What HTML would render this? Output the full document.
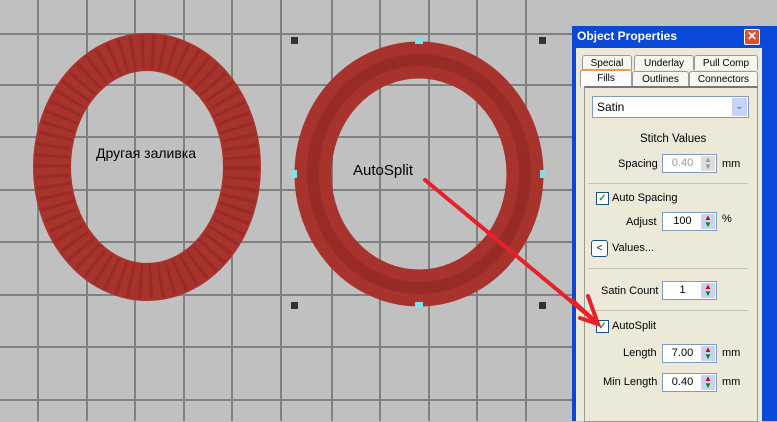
<!DOCTYPE html>
<html><head><style>
body{margin:0;width:777px;height:421px;overflow:hidden;background:#c0c0c0;font-family:"Liberation Sans",sans-serif;position:relative}
.p{position:absolute;left:572px;top:26px;width:205px;height:395px;background:#0a48d8;}
.t{position:absolute;left:5px;top:3px;color:#fff;font-weight:bold;font-size:12px}
.x{position:absolute;left:172px;top:3px;width:14px;height:14px;background:#e05030;border:1px solid #fff;border-radius:2px;color:#fff;font-size:12px;line-height:13px;text-align:center;font-weight:bold}
.in{position:absolute;left:4px;top:22px;width:186px;height:373px;background:#ece9d8}
.tab{position:absolute;height:14px;border:1px solid #9a9a9a;border-bottom:none;background:#f7f7f2;font-size:10px;text-align:center;line-height:15px;border-radius:3px 3px 0 0}
.l{position:absolute;font-size:11px;color:#000}
.box{position:absolute;height:17px;background:#fff;border:1px solid #7f9db9;font-size:11px;line-height:17px;text-align:center;padding-right:14px;box-sizing:content-box}
.sp{position:absolute;width:14px;height:15px;background:#c6d3f7;top:1px;right:1px;font-size:8px;line-height:7px;text-align:center}
.hr{position:absolute;left:12px;width:160px;height:1px;background:#c5c2b2}
.cb{position:absolute;width:11px;height:11px;border:1px solid #1c5180;background:#fff;color:#21a121;font-size:10px;line-height:11px;text-align:center;font-weight:bold}
</style></head><body>
<svg width="777" height="421" style="position:absolute;left:0;top:0">
<g stroke="#808080" stroke-width="2">
<line x1="38" y1="0" x2="38" y2="421"/><line x1="87" y1="0" x2="87" y2="421"/><line x1="135" y1="0" x2="135" y2="421"/><line x1="184" y1="0" x2="184" y2="421"/><line x1="232" y1="0" x2="232" y2="421"/><line x1="281" y1="0" x2="281" y2="421"/><line x1="332" y1="0" x2="332" y2="421"/><line x1="380" y1="0" x2="380" y2="421"/><line x1="429" y1="0" x2="429" y2="421"/><line x1="477" y1="0" x2="477" y2="421"/><line x1="526" y1="0" x2="526" y2="421"/>
<line x1="0" y1="34" x2="777" y2="34"/><line x1="0" y1="85" x2="777" y2="85"/><line x1="0" y1="137" x2="777" y2="137"/><line x1="0" y1="190" x2="777" y2="190"/><line x1="0" y1="242" x2="777" y2="242"/><line x1="0" y1="295" x2="777" y2="295"/><line x1="0" y1="347" x2="777" y2="347"/><line x1="0" y1="400" x2="777" y2="400"/>
</g>
<ellipse cx="147" cy="167" rx="95" ry="115" fill="none" stroke="#a8322c" stroke-width="38"/>
<ellipse cx="147" cy="167" rx="95" ry="115" fill="none" stroke="#7e1f1a" stroke-width="34" stroke-dasharray="3 7" opacity=".35"/>
<ellipse cx="419" cy="174" rx="106" ry="114" fill="none" stroke="#a8322c" stroke-width="37"/>
<ellipse cx="419" cy="174" rx="106" ry="114" fill="none" stroke="#8a241f" stroke-width="12" opacity=".5"/>
<g fill="#333"><rect x="291" y="37" width="7" height="7"/><rect x="539" y="37" width="7" height="7"/><rect x="291" y="302" width="7" height="7"/><rect x="539" y="302" width="7" height="7"/></g>
<g fill="#7ee0ea"><rect x="415" y="38" width="8" height="6"/><rect x="415" y="302" width="8" height="6"/><rect x="291" y="170" width="6" height="8"/><rect x="540" y="170" width="6" height="8"/></g>
<text x="96" y="158" font-size="14" font-family="Liberation Sans">Другая заливка</text>
<text x="353" y="175" font-size="15" font-family="Liberation Sans">AutoSplit</text>
</svg>
<div class="p"><div class="t">Object Properties</div><div class="x">✕</div>
<div class="in">
<div class="tab" style="left:6px;top:7px;width:48px">Special</div>
<div class="tab" style="left:58px;top:7px;width:58px">Underlay</div>
<div class="tab" style="left:118px;top:7px;width:62px">Pull Comp</div>
<div class="tab" style="left:4px;top:21px;width:50px;height:16px;border-top:2px solid #f0a030;background:#fcfcfe">Fills</div>
<div class="tab" style="left:56px;top:23px;width:55px">Outlines</div>
<div class="tab" style="left:113px;top:23px;width:67px">Connectors</div>
<div style="position:absolute;left:8px;top:38px;width:172px;height:333px;border:1px solid #9a9a9a;border-top:2px solid #777"></div>
<div class="box" style="left:16px;top:48px;width:137px;text-align:left;padding-left:4px;padding-right:14px;font-size:12px;height:20px;line-height:20px">Satin<div class="sp" style="width:15px;height:18px;line-height:18px;font-size:10px;color:#4d6185">⌄</div></div>
<div class="l" style="left:64px;top:85px;font-size:11.5px">Stitch Values</div>
<div class="l" style="left:42px;top:110px">Spacing</div>
<div class="box" style="left:86px;top:106px;width:39px;color:#999">0.40<div class="sp" style="background:#ddd;color:#999">▲<br>▼</div></div>
<div class="l" style="left:146px;top:110px">mm</div>
<div class="hr" style="top:135px"></div>
<div class="cb" style="left:20px;top:144px">✓</div><div class="l" style="left:36px;top:144px">Auto Spacing</div>
<div class="l" style="left:50px;top:168px">Adjust</div>
<div class="box" style="left:86px;top:164px;width:39px">100<div class="sp" style="color:#d00">▲<br><span style="color:#080">▼</span></div></div>
<div class="l" style="left:146px;top:165px">%</div>
<div style="position:absolute;left:15px;top:192px;width:15px;height:15px;border:1px solid #1c5180;border-radius:3px;background:#fff;font-size:10px;text-align:center;line-height:15px">&lt;</div>
<div class="l" style="left:36px;top:194px">Values...</div>
<div class="hr" style="top:220px"></div>
<div class="l" style="left:25px;top:237px">Satin Count</div>
<div class="box" style="left:86px;top:233px;width:39px">1<div class="sp" style="color:#d00">▲<br><span style="color:#080">▼</span></div></div>
<div class="hr" style="top:262px"></div>
<div class="cb" style="left:20px;top:272px">✓</div><div class="l" style="left:36px;top:272px">AutoSplit</div>
<div class="l" style="left:47px;top:299px">Length</div>
<div class="box" style="left:86px;top:296px;width:39px">7.00<div class="sp" style="color:#d00">▲<br><span style="color:#080">▼</span></div></div>
<div class="l" style="left:146px;top:299px">mm</div>
<div class="l" style="left:27px;top:328px">Min Length</div>
<div class="box" style="left:86px;top:325px;width:39px">0.40<div class="sp" style="color:#d00">▲<br><span style="color:#080">▼</span></div></div>
<div class="l" style="left:146px;top:328px">mm</div>
</div></div>
<svg width="777" height="421" style="position:absolute;left:0;top:0">
<line x1="425" y1="180" x2="596" y2="322" stroke="#e8202a" stroke-width="4" stroke-linecap="round"/>
<path d="M572 300 L598 324 M580 318 L598 324 L588 296" stroke="#e8202a" stroke-width="4" fill="none" stroke-linecap="round"/>
</svg>
</body></html>
